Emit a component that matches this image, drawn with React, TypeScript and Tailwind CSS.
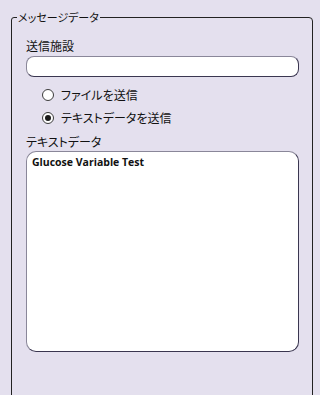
import React, { useState } from 'react';

const jp = "font-['Noto_Sans_CJK_JP',sans-serif] [font-feature-settings:'palt']";

const Radio: React.FC<{ checked: boolean; label: string; onClick: () => void }> = ({ checked, label, onClick }) => (
  <label className="flex items-center gap-[7px] h-[23px] cursor-pointer" onClick={onClick}>
    <span className="w-[12px] h-[12px] rounded-full border border-[#3c3c3c] bg-white flex items-center justify-center">
      {checked && <span className="w-[6px] h-[6px] rounded-full bg-[#1a1a1a]"></span>}
    </span>
    <span className={`${jp} text-[12px] text-[#111]`}>{label}</span>
  </label>
);

export default function App() {
  const [mode, setMode] = useState<'file' | 'text'>('text');

  return (
    <div className="w-[320px] h-[395px] bg-[#e4e0ee] overflow-hidden pt-[9px] pl-[11px] pr-[7px]">
      <fieldset className="h-[420px] border border-[#222] rounded-tr-[4px] rounded-tl-[3px] pl-[14px] pr-[13px] m-0 min-w-0">
        <legend className={`${jp} text-[11px] text-[#111] ml-[-9px] px-[1px] leading-[16px]`}>
          メッセージデータ
        </legend>
        <div className={`${jp} text-[12px] text-[#111] mt-[13px] leading-[16px]`}>送信施設</div>
        <input
          type="text"
          className="block mt-[2px] w-[273px] h-[21px] bg-white rounded-[8px] border border-[#3a3650] border-t-[#8a8799] border-l-[#8a8799] outline-none px-2 text-[12px]"
        />
        <div className="mt-[6px] pl-[16px] flex flex-col">
          <Radio checked={mode === 'file'} label="ファイルを送信" onClick={() => setMode('file')} />
          <Radio checked={mode === 'text'} label="テキストデータを送信" onClick={() => setMode('text')} />
        </div>
        <div className={`${jp} text-[12px] text-[#111] mt-[5px] leading-[16px]`}>テキストデータ</div>
        <textarea
          defaultValue="Glucose Variable Test"
          className="block mt-[1px] w-[273px] h-[201px] resize-none bg-white rounded-[10px] border border-[#3a3650] border-t-[#8a8799] border-l-[#8a8799] outline-none px-[5px] pt-[3px] font-['Open_Sans',sans-serif] font-bold text-[10.5px] text-[#111]"
        />
      </fieldset>
    </div>
  );
}
